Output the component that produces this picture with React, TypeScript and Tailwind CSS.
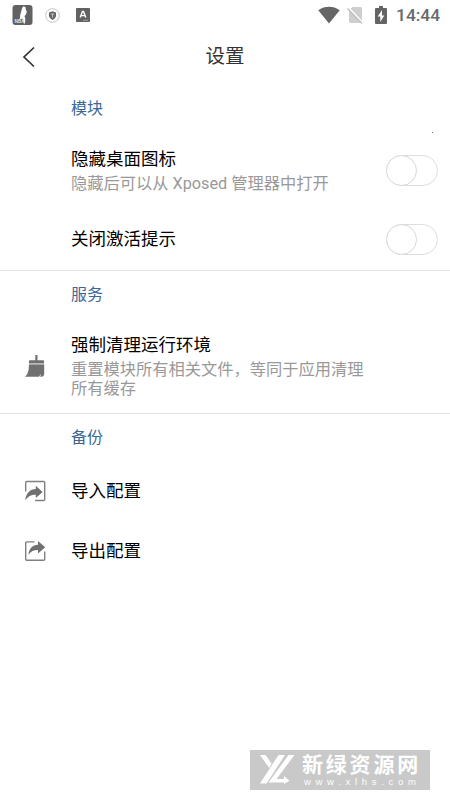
import type { ReactNode } from 'react';

interface RowProps {
  title: string;
  summary?: string;
  icon?: ReactNode;
  action?: ReactNode;
  className?: string;
}

function Row({ title, summary, icon, action, className }: RowProps) {
  return (
    <div className={`flex items-center pr-3 ${className}`}>
      <div className="w-[71px] shrink-0 pl-6">{icon}</div>
      <div className="flex-1">
        <h3 className="text-[17.5px] leading-6 text-black">{title}</h3>
        {summary && (
          <p className="mt-[3px] w-[300px] text-[16.25px] leading-[19px] text-[#999999]">{summary}</p>
        )}
      </div>
      {action}
    </div>
  );
}

function SectionTitle({ children }: { children: ReactNode }) {
  return <h2 className="flex h-12 items-center pl-[71px] text-base text-[#3c6796]">{children}</h2>;
}

function Toggle() {
  return (
    <button className="flex h-[31px] w-[52px] rounded-full border border-[#dedede] bg-white">
      <span className="-mt-px -ml-px h-[31px] w-[31px] rounded-full border border-[#d8d8d8] bg-white" />
    </button>
  );
}

function StatusBar() {
  return (
    <div className="flex h-[30px] items-center justify-between pr-[10px] pl-3 text-[#686868]">
      <div className="flex items-center">
        <svg width="21" height="20" viewBox="0 0 21 20">
          <rect x="0.5" width="20" height="20" rx="3" fill="#626262" />
          <path d="M11 1.500c2.200-.5 3.200 1 2.600 2.500l1.200 2.500-.8 3-1.500 1.500.8 2.500-.3 5h-1.200l-1.300-5-1 .5H7.800l.4-4 1-3.500.8-3z" fill="#fff" />
          <text x="2.500" y="18.200" fontSize="5" fontWeight="bold" fill="#ddd">NBA</text>
        </svg>
        <svg className="ml-3" width="15" height="15" viewBox="0 0 15 15">
          <circle cx="7.5" cy="7.5" r="6.8" fill="none" stroke="#b5b5b5" strokeWidth="0.8" />
          <path d="M7.5 3.2 11 4.5v3c0 2-1.4 3.4-3.5 4.4C5.4 10.9 4 9.5 4 7.5v-3z" fill="#666" />
          <path d="M5.8 6h3.4M7.5 6v3.5" stroke="#ddd" strokeWidth="0.8" />
        </svg>
        <svg className="ml-4" width="14" height="14" viewBox="0 0 14 14">
          <rect width="14" height="14" rx="1" fill="#626262" />
          <path d="m4.2 9.500 2.300-6h1l2.300 6M5.200 7.600h3.600" fill="none" stroke="#fff" strokeWidth="1.400" />
          <path d="M7 12.300h5" stroke="#aaa" strokeWidth="0.8" />
        </svg>
      </div>
      <div className="flex items-center">
        <svg width="23" height="18" viewBox="0 0 23 18">
          <path d="M.3 4.300C6.500-.3 15.300-.3 21.700 4.300L11 17.500z" fill="#666" />
        </svg>
        <svg className="ml-[6px]" width="17" height="18" viewBox="0 0 17 18">
          <path d="M5.5 1h8q1.500 0 1.500 1.500V17H4q-2 0-2-2V4.500z" fill="#cecece" />
          <path d="m1 1.500 15 16" stroke="#fff" strokeWidth="2.400" />
          <path d="m.5 2.500 14.500 15" stroke="#bcbcbc" strokeWidth="1.200" />
        </svg>
        <svg className="ml-[11px]" width="12" height="18" viewBox="0 0 12 18">
          <path d="M4 0h4v2h3q1 0 1 1v14q0 1-1 1H1q-1 0-1-1V3q0-1 1-1h3z" fill="#646464" />
          <path d="M7 4 2.700 10.500h2.600V16l4-6.600H7z" fill="#fff" />
        </svg>
        <span className="ml-[9px] w-[44px] font-[Roboto] text-[17.4px] leading-5 font-medium whitespace-nowrap">14:44</span>
      </div>
    </div>
  );
}

function BroomIcon() {
  return (
    <svg className="mt-px" width="22" height="24" viewBox="0 0 22 24" fill="#707070">
      <path d="M11.300 1h2.200v5.300h5.700q.8 0 .8.800v2H5v-2q0-.8.800-.8h5.500z" />
      <path d="M5 9.100h15v1.400H5z" fill="#b4b4b4" />
      <path d="M5 10.500h15.200v9.300q0 2.700-2.700 3h-1.300l.8-3-2 3H1q3-2.500 3.600-7z" />
    </svg>
  );
}

function ImportIcon() {
  return (
    <svg className="mt-px" width="22" height="22" viewBox="0 0 22 22">
      <path d="M1.700 11.500V2.500q0-1 1-1h17q1 0 1 1v17q0 1-1 1H11" fill="none" stroke="#808080" strokeWidth="1.400" />
      <path d="M1.200 20C2 13.500 6 9.300 11.800 9.100V5.800l6.800 6.100-6.800 6.100v-3.300C7.300 14.500 4.300 16.200 1.200 20z" fill="#707070" />
    </svg>
  );
}

function ExportIcon() {
  return (
    <svg className="mt-px" width="22" height="22" viewBox="0 0 22 22">
      <path d="M10.500 1.900H2.700q-1 0-1 1v16.400q0 1 1 1h17q1 0 1-1V11.500" fill="none" stroke="#808080" strokeWidth="1.400" />
      <path d="M4.500 14.800C4.800 8.500 8.600 5 14 4.700V1l7.200 6.200L14 13.400v-3.300c-4-.1-7 1.200-9.500 4.700z" fill="#707070" />
    </svg>
  );
}

function Watermark() {
  return (
    <div className="absolute top-[750px] left-[250px] flex h-10 w-[180px] bg-[#c9c9c9] pl-[10px] text-white">
      <svg className="mt-[5px]" width="36" height="30" viewBox="0 0 36 30" fill="#fff">
        <path d="M0 0h5.500l6 8.500L9.300 13z" />
        <path d="M18.500 0H25L6.500 28.500H0z" />
        <path d="M28.500 0h6L16.500 24H24v-3l5.500 4.800-5.500 3.200v-1.500H8.500z" />
      </svg>
      <div className="ml-[6px] whitespace-nowrap">
        <div className="mt-[4px] text-[21px] leading-[23px] font-bold tracking-[2.8px]">新绿资源网</div>
        <div className="pl-[2px] font-['Liberation_Sans'] text-[9.5px] leading-[10px] tracking-[4.7px]">www.xlhs.com</div>
      </div>
    </div>
  );
}

export default function App() {
  return (
    <div className="relative h-[800px] w-[450px] overflow-hidden bg-white font-[Roboto,'Noto_Sans_CJK_SC',sans-serif]">
      <StatusBar />

      <header className="grid h-[54px] grid-cols-[71px_1fr_71px] items-center">
        <svg className="ml-[22px]" width="14" height="22" viewBox="0 0 14 22">
          <path d="M12 1.500 2 11l10 9.500" fill="none" stroke="#333" strokeWidth="1.700" />
        </svg>
        <h1 className="text-center text-[19.5px] leading-6 text-[#333333]">设置</h1>
      </header>

      <main>
        <section className="pt-px">
          <SectionTitle>模块</SectionTitle>
          <Row
            className="h-[74px]"
            title="隐藏桌面图标"
            summary="隐藏后可以从 Xposed 管理器中打开"
            action={<Toggle />}
          />
          <Row className="h-[63px] pt-px" title="关闭激活提示" action={<Toggle />} />
        </section>

        <section className="border-t border-[#e3e3e3]">
          <SectionTitle>服务</SectionTitle>
          <Row
            className="h-[94px] pb-[2px]"
            icon={<BroomIcon />}
            title="强制清理运行环境"
            summary="重置模块所有相关文件，等同于应用清理所有缓存"
          />
        </section>

        <section className="border-t border-[#e3e3e3]">
          <SectionTitle>备份</SectionTitle>
          <Row className="h-[60px] pb-[3px]" icon={<ImportIcon />} title="导入配置" />
          <Row className="h-[60px] pb-[3px]" icon={<ExportIcon />} title="导出配置" />
        </section>
      </main>

      <i className="absolute top-[132px] left-[432px] h-px w-px bg-[#777777]" />
      <Watermark />
    </div>
  );
}
